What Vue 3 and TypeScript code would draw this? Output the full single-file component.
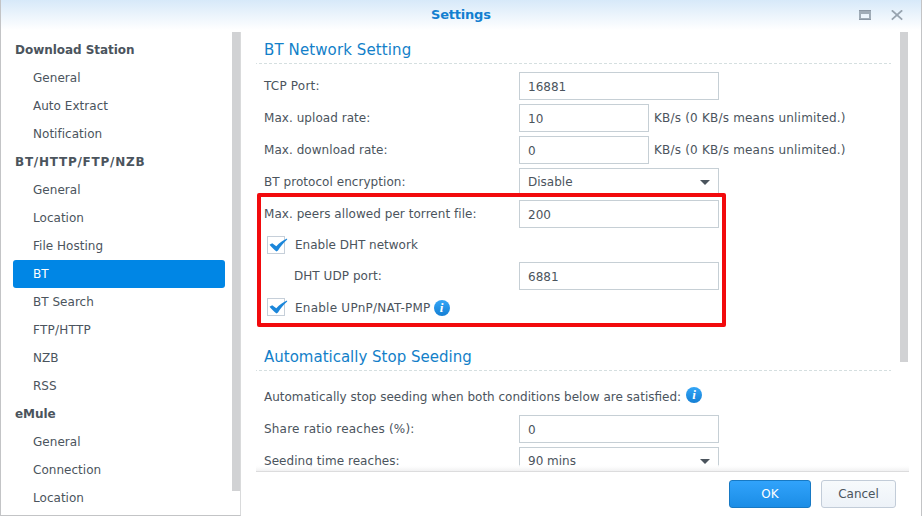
<script setup lang="ts">
interface NavEntry {
  label: string
  kind: 'group' | 'item'
  active?: boolean
  caps?: boolean
}

const nav: NavEntry[] = [
  { label: 'Download Station', kind: 'group' },
  { label: 'General', kind: 'item' },
  { label: 'Auto Extract', kind: 'item' },
  { label: 'Notification', kind: 'item' },
  { label: 'BT/HTTP/FTP/NZB', kind: 'group', caps: true },
  { label: 'General', kind: 'item' },
  { label: 'Location', kind: 'item' },
  { label: 'File Hosting', kind: 'item' },
  { label: 'BT', kind: 'item', active: true },
  { label: 'BT Search', kind: 'item' },
  { label: 'FTP/HTTP', kind: 'item', caps: true },
  { label: 'NZB', kind: 'item' },
  { label: 'RSS', kind: 'item' },
  { label: 'eMule', kind: 'group' },
  { label: 'General', kind: 'item' },
  { label: 'Connection', kind: 'item' },
  { label: 'Location', kind: 'item' },
]

const tick =
  'M.5 6.700L3.200 5.200L7.300 8.200C10.500 5 14 2 18 .5L18.200 1.500C14.500 4.500 11.500 8.500 9 12.500L7.500 13.500C5 11.500 2.500 9 .5 6.700Z'
</script>

<template>
  <div class="window">
    <header class="titlebar">
      <span class="title">Settings</span>
      <div class="tools">
        <svg width="12" height="11" viewBox="0 0 12 11">
          <path d="M0 0H12V10H0ZM2 4V8H10V4Z" fill="#a0acb7" fill-rule="evenodd" />
          <path d="M0 0H12V1H0ZM0 9H12V10H0Z" fill="#8b97a4" />
        </svg>
        <svg width="12" height="11" viewBox="0 0 12 11">
          <path d="M.8 .3L11.200 9.700M11.200 .3L.8 9.700" stroke="#97a3af" stroke-width="1.800" fill="none" />
        </svg>
      </div>
    </header>

    <div class="body">
      <aside class="sidebar">
        <nav class="nav">
          <div
            v-for="(n, i) in nav"
            :key="i"
            class="nav-row"
            :class="[n.kind, { active: n.active, caps: n.caps }]"
          >
            <span>{{ n.label }}</span>
          </div>
        </nav>
        <div class="track"><div class="thumb side-thumb"></div></div>
      </aside>

      <main class="main">
        <div class="scroll">
          <div class="form">
            <h2 class="heading first"><span>BT Network Setting</span></h2>
            <div class="row"><label class="wide">TCP Port:</label><div class="field">16881</div></div>
            <div class="row">
              <label>Max. upload rate:</label><div class="field short">10</div>
              <span class="unit">KB/s (0 KB/s means unlimited.)</span>
            </div>
            <div class="row">
              <label>Max. download rate:</label><div class="field short">0</div>
              <span class="unit">KB/s (0 KB/s means unlimited.)</span>
            </div>
            <div class="row">
              <label>BT protocol encryption:</label>
              <div class="field select"><span>Disable</span><i class="caret"></i></div>
            </div>
            <div class="row"><label>Max. peers allowed per torrent file:</label><div class="field">200</div></div>
            <div class="check-row">
              <div class="box">
                <svg width="19" height="14" viewBox="0 0 19 14"><path :d="tick" fill="#1b86da" /></svg>
              </div>
              <span>Enable DHT network</span>
            </div>
            <div class="row dht"><label>DHT UDP port:</label><div class="field">6881</div></div>
            <div class="check-row upnp">
              <div class="box">
                <svg width="19" height="14" viewBox="0 0 19 14"><path :d="tick" fill="#1b86da" /></svg>
              </div>
              <span>Enable UPnP/NAT-PMP</span>
              <div class="info"><i>i</i></div>
            </div>
            <h2 class="heading second"><span>Automatically Stop Seeding</span></h2>
            <div class="para">
              <span>Automatically stop seeding when both conditions below are satisfied:</span>
              <div class="info"><i>i</i></div>
            </div>
            <div class="row"><label class="wide">Share ratio reaches (%):</label><div class="field">0</div></div>
            <div class="row">
              <label>Seeding time reaches:</label>
              <div class="field select"><span>90 mins</span><i class="caret"></i></div>
            </div>
          </div>
          <div class="track"><div class="thumb main-thumb"></div></div>
          <div class="fade"></div>
        </div>
        <footer class="footer">
          <button class="btn primary">OK</button>
          <button class="btn">Cancel</button>
        </footer>
      </main>
    </div>
    <div class="highlight"></div>
  </div>
</template>

<style>
body {
  background: #fff;
  overflow: hidden;
}
</style>

<style scoped>
* {
  box-sizing: border-box;
}
.window {
  position: relative;
  display: flex;
  flex-direction: column;
  width: 922px;
  height: 516px;
  border-left: 1px solid #c3c4c6;
  border-right: 1px solid #c3c4c6;
  background: linear-gradient(#d7e9f9, #fff 30px);
  font: 12px/28px Verdana, "DejaVu Sans", sans-serif;
  color: #4b545d;
  overflow: hidden;
  white-space: nowrap;
}
.titlebar {
  display: flex;
  align-items: center;
  height: 32px;
  flex: none;
  padding: 0 18px 2px 430px;
}
.title {
  flex: 1;
  color: #137fd0;
  font-size: 13px;
  font-weight: bold;
  letter-spacing: -0.2px;
}
.tools {
  display: flex;
  gap: 20px;
}
.tools svg {
  display: block;
}
.body {
  display: flex;
  flex: 1;
  min-height: 0;
}
.sidebar {
  display: flex;
  width: 240px;
  border-bottom: 1px solid #c3c4c6;
  border-right: 1px solid #d9dadb;
}
.nav {
  width: 231px;
  padding: 4px 7px 0 12px;
  overflow: hidden;
}
.nav-row {
  height: 28px;
  line-height: 29px;
  border-radius: 3px;
}
.group {
  padding-left: 2px;
  font-weight: bold;
  letter-spacing: -0.04px;
}
.group.caps {
  letter-spacing: 0.75px;
}
.item {
  padding-left: 20px;
  letter-spacing: 0.03px;
}
.item.caps {
  letter-spacing: 0.25px;
}
.active {
  background: #0086e5;
  color: #fff;
}
.track {
  width: 8px;
  flex: none;
}
.thumb {
  background: #d1d2d4;
}
.side-thumb {
  height: 459px;
}
.main-thumb {
  height: 330px;
}
.main {
  display: flex;
  flex-direction: column;
  flex: 1;
  padding-left: 15px;
}
.scroll {
  position: relative;
  display: flex;
  gap: 9px;
  height: 440px;
  width: 653px;
  border-bottom: 1px solid #dcdcdd;
  overflow: hidden;
}
.form {
  width: 635px;
}
.fade {
  position: absolute;
  left: 0;
  right: 0;
  bottom: 0;
  height: 6px;
  background: linear-gradient(rgba(255, 255, 255, 0.5), #fdfdfd 2px, #f1f1f2);
}
.heading {
  height: 32px;
  margin: 0;
  padding-left: 8px;
  font-size: 15px;
  font-weight: normal;
  line-height: 36px;
  color: #137fc9;
  background: repeating-linear-gradient(90deg, #d5dfe0 0 1px, transparent 1px 3px, #d5dfe0 3px 5px) bottom / 100% 1px no-repeat;
}
.first {
  margin-bottom: 8px;
  letter-spacing: 0.11px;
}
.second {
  margin-top: 19px;
}
.row {
  display: flex;
  height: 28px;
  margin-bottom: 4px;
  padding-left: 8px;
}
.row label {
  width: 255px;
  line-height: 29px;
  letter-spacing: 0.05px;
}
.row label.wide {
  letter-spacing: 0.2px;
}
.field {
  width: 200px;
  height: 28px;
  border: 1px solid #c6cfd5;
  padding-left: 8px;
  line-height: 28px;
  background: #fff;
}
.short {
  width: 130px;
}
.unit {
  margin-left: 5px;
  line-height: 29px;
  letter-spacing: 0.2px;
}
.select {
  display: flex;
  justify-content: space-between;
  padding-right: 8px;
  line-height: 26px;
}
.caret {
  margin-top: 11px;
  width: 10px;
  height: 5px;
  background: #4b545d;
  clip-path: polygon(0 0, 100% 0, 50% 100%);
}
.check-row {
  display: flex;
  height: 26px;
  margin-bottom: 4px;
  padding: 4px 0 0 11px;
}
.check-row > span {
  margin-left: 10px;
  line-height: 18px;
}
.box {
  position: relative;
  width: 18px;
  height: 18px;
  border: 1px solid #c6cfd9;
}
.box svg {
  position: absolute;
  left: 1px;
  top: 1px;
}
.dht label {
  padding-left: 30px;
}
.info {
  width: 16px;
  height: 16px;
  border-radius: 50%;
  background: linear-gradient(#34a6f7, #157fd4);
  color: #fff;
  text-align: center;
}
.info i {
  display: block;
  font: italic bold 13px/15px "Liberation Serif", serif;
}
.upnp > span {
  line-height: 20px;
  letter-spacing: 0.24px;
}
.upnp .info {
  margin: 2px 0 0 3px;
}
.para {
  display: flex;
  height: 44px;
  padding: 12px 0 0 8px;
}
.para span {
  line-height: 28px;
}
.para .info {
  margin: 4px 0 0 5px;
}
.footer {
  display: flex;
  justify-content: flex-end;
  gap: 10px;
  padding: 8px 25px 0 0;
}
.btn {
  width: 75px;
  height: 28px;
  padding: 0;
  border: 1px solid #c2ccd8;
  border-radius: 3px;
  background: linear-gradient(#f7fafc, #edf2f8);
  font: inherit;
  line-height: 26px;
  color: #4b545d;
}
.primary {
  width: 82px;
  border-color: #1779c4;
  background: linear-gradient(#31a3fb, #1b8de6);
  color: #fff;
}
.highlight {
  position: absolute;
  left: 256px;
  top: 193px;
  width: 469px;
  height: 134px;
  border: 4px solid #f20a0d;
  border-radius: 2px;
}
</style>
